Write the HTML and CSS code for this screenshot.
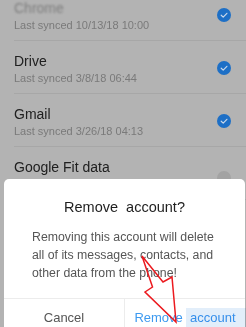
FILE: index.html
```html
<!DOCTYPE html>
<html>
<head>
<meta charset="utf-8">
<link rel="stylesheet" href="styles.css">
</head>
<body>
<div class="screen">
  <div class="list">
    <div class="row">
      <div class="texts">
        <div class="title blurred">Chrome</div>
        <div class="sub">Last synced 10/13/18 10:00</div>
      </div>
      <span class="check on"><svg viewBox="0 0 14 14" width="14" height="14"><path d="M4.2 7.2 L6.2 9.1 L9.9 5.3" fill="none" stroke="#c9d8ea" stroke-width="1.2" stroke-linecap="round" stroke-linejoin="round"/></svg></span>
    </div>
    <div class="row">
      <div class="texts">
        <div class="title">Drive</div>
        <div class="sub">Last synced 3/8/18 06:44</div>
      </div>
      <span class="check on"><svg viewBox="0 0 14 14" width="14" height="14"><path d="M4.2 7.2 L6.2 9.1 L9.9 5.3" fill="none" stroke="#c9d8ea" stroke-width="1.2" stroke-linecap="round" stroke-linejoin="round"/></svg></span>
    </div>
    <div class="row">
      <div class="texts">
        <div class="title">Gmail</div>
        <div class="sub">Last synced 3/26/18 04:13</div>
      </div>
      <span class="check on"><svg viewBox="0 0 14 14" width="14" height="14"><path d="M4.2 7.2 L6.2 9.1 L9.9 5.3" fill="none" stroke="#c9d8ea" stroke-width="1.2" stroke-linecap="round" stroke-linejoin="round"/></svg></span>
    </div>
    <div class="row">
      <div class="texts">
        <div class="title">Google Fit data</div>
        <div class="sub">&nbsp;</div>
      </div>
      <span class="check off"></span>
    </div>
  </div>

  <div class="dialog">
    <div class="d-title">Remove&nbsp; account?</div>
    <div class="d-body">Removing this account will delete all of its messages, contacts, and other data from the phone!</div>
    <div class="d-actions">
      <div class="btn cancel">Cancel</div>
      <div class="btn remove">Remove&nbsp; account</div>
    </div>
  </div>

  <div class="highlight"></div>
  <svg class="arrow" width="246" height="327" viewBox="0 0 246 327">
    <polygon points="142,256 152.5,287 145,292 176,322 172,277 163,282" fill="none" stroke="#ec1a1f" stroke-width="1.5" stroke-linejoin="miter"/>
  </svg>
</div>
</body>
</html>
```

FILE: styles.css
```css
* { box-sizing: border-box; }
html, body { margin: 0; padding: 0; }
body {
  width: 246px;
  height: 327px;
  overflow: hidden;
  background: #b3b3b3;
  font-family: "Liberation Sans", Arial, sans-serif;
}
.screen {
  position: relative;
  width: 246px;
  height: 327px;
  overflow: hidden;
  background: #b3b3b3;
}
.list {
  margin-top: -12px;
}
.row {
  display: flex;
  align-items: center;
  height: 53px;
  margin-left: 14px;
  border-bottom: 1px solid #a7a7a7;
  padding-right: 15px;
}
.texts {
  flex: 1;
  padding-top: 6px;
}
.title {
  font-size: 14px;
  line-height: 17px;
  color: #202020;
}
.title.blurred {
  color: #7e7e7e;
  filter: blur(1px);
}
.sub {
  font-size: 11px;
  line-height: 17px;
  color: #7a7a7a;
}
.check {
  width: 14px;
  height: 14px;
  border-radius: 50%;
  display: flex;
}
.check.on { background: #1d6fc6; margin-top: 2px; }
.check.off { background: #a3a3a3; margin-top: 10px; }

.dialog {
  position: absolute;
  left: 4px;
  top: 179px;
  width: 241px;
  height: 160px;
  background: #ffffff;
  border-radius: 5px 5px 0 0;
  display: flex;
  flex-direction: column;
}
.d-title {
  margin-top: 20px;
  text-align: center;
  font-size: 14.5px;
  line-height: 17px;
  color: #1f1f1f;
}
.d-body {
  margin-top: 12px;
  padding: 0 22px 0 28px;
  font-size: 12.3px;
  line-height: 18px;
  color: #565656;
  height: 54px;
}
.d-actions {
  margin-top: 16px;
  border-top: 1px solid #ececec;
  display: flex;
  flex: 1;
}
.btn {
  flex: 1;
  text-align: center;
  font-size: 13px;
  line-height: 16px;
  padding-top: 11px;
}
.cancel {
  color: #555555;
  border-right: 1px solid #ececec;
}
.remove {
  color: #3d9af0;
}
.highlight {
  position: absolute;
  left: 186px;
  top: 308px;
  width: 60px;
  height: 19px;
  background: #e2eefa;
  mix-blend-mode: multiply;
}
.arrow {
  position: absolute;
  left: 0;
  top: 0;
}
```
